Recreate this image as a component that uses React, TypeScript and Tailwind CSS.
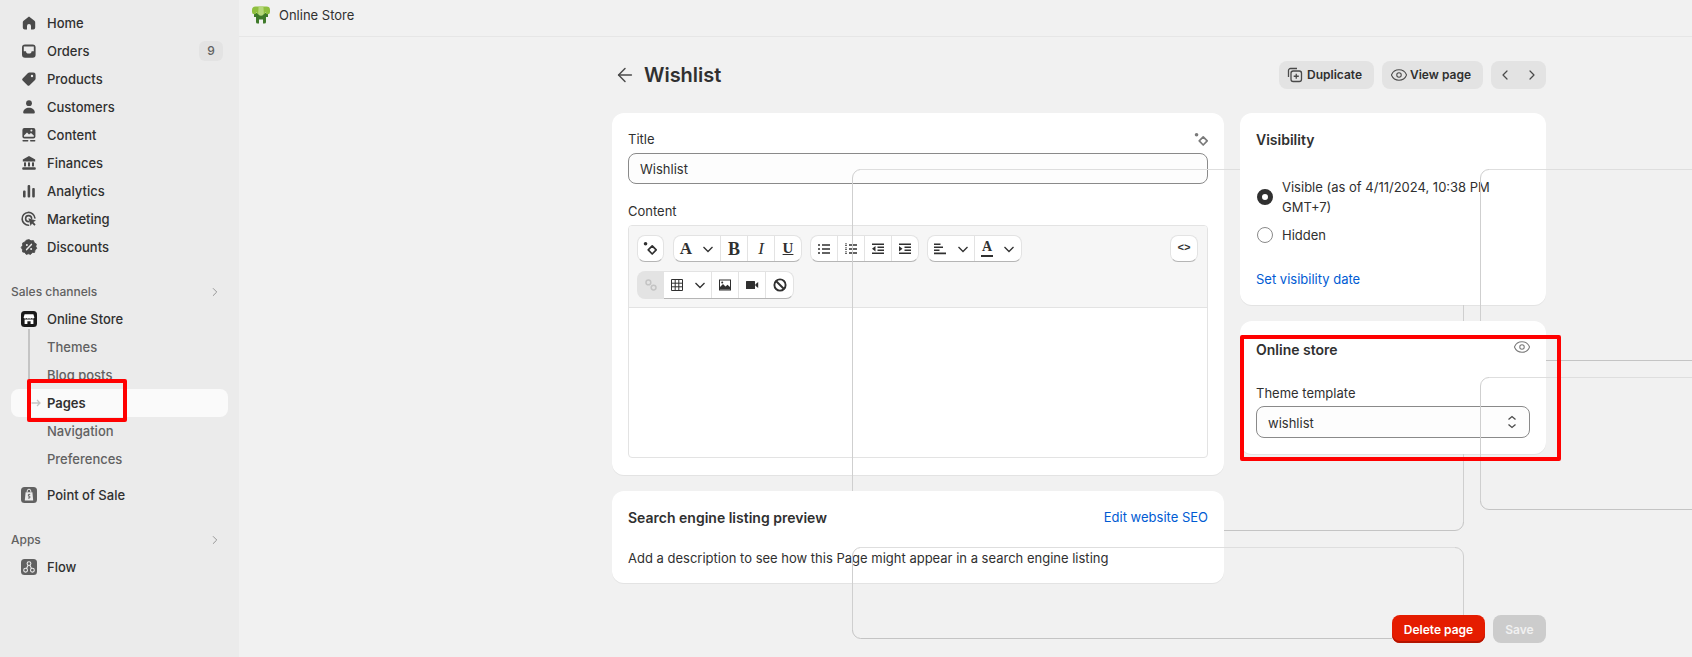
import type { ReactNode } from 'react';
import { ArrowLeft, ChevronLeft, ChevronRight, Eye } from 'lucide-react';

const Ico = ({ children, size = 20, className = '' }: { children: ReactNode; size?: number; className?: string }) => (
  <svg width={size} height={size} viewBox="0 0 20 20" className={`shrink-0 ${className}`} fill="#4a4a4a">
    {children}
  </svg>
);

const navIcons: Record<string, ReactNode> = {
  Home: <path d="M10 3.4 4.600 7.700C4 8.200 3.800 8.700 3.800 9.400V14.600A2 2 0 0 0 5.800 16.600H8V13A2 2 0 0 1 12 13V16.600H14.200A2 2 0 0 0 16.200 14.600V9.400C16.200 8.700 16 8.200 15.400 7.700Z" />,
  Orders: (
    <>
      <rect x="3" y="3.600" width="13.600" height="13.200" rx="3" />
      <path d="M4.800 5.400H14.800V10.200H12.600A2.800 2.400 0 0 1 7 10.200H4.800Z" fill="#ebebeb" />
    </>
  ),
  Products: <path fillRule="evenodd" d="M10.500 3.500H14.400A2.200 2.200 0 0 1 16.600 5.700V9.400A2 2 0 0 1 16 11L10.600 16.300A1.600 1.600 0 0 1 8.400 16.300L3.600 11.600A1.600 1.600 0 0 1 3.600 9.400L9 4.100A2 2 0 0 1 10.500 3.500ZM13 5.800A1.200 1.200 0 1 0 13 8.200 1.200 1.200 0 1 0 13 5.800Z" />,
  Customers: (
    <>
      <circle cx="10" cy="6.200" r="2.900" />
      <path d="M4.200 15.600C4.200 12.600 7 10.800 10 10.800S15.800 12.600 15.800 15.600A1 1 0 0 1 14.800 16.600H5.200A1 1 0 0 1 4.200 15.600Z" />
    </>
  ),
  Content: (
    <>
      <rect x="3.400" y="3" width="13" height="10.400" rx="2" />
      <path d="M5 10.500 8 7.400 10 9.400 12 8 14.800 10.500V11.800H5Z" fill="#ebebeb" />
      <circle cx="12.400" cy="5.600" r="1" fill="#ebebeb" />
      <rect x="3.400" y="15" width="6" height="1.500" rx=".7" />
      <rect x="11" y="15" width="5.400" height="1.500" rx=".7" />
    </>
  ),
  Finances: (
    <>
      <path d="M10 3 16.200 6.400V8.400H3.800V6.400Z" />
      <rect x="5" y="9.400" width="2" height="4" />
      <rect x="9" y="9.400" width="2" height="4" />
      <rect x="13" y="9.400" width="2" height="4" />
      <rect x="3.200" y="14.200" width="13.600" height="2.600" rx="1" />
    </>
  ),
  Analytics: (
    <>
      <rect x="4" y="9.600" width="2.600" height="7" rx="1" />
      <rect x="8.600" y="4" width="2.600" height="12.600" rx="1" />
      <rect x="13.200" y="7" width="2.600" height="9.600" rx="1" />
    </>
  ),
  Marketing: (
    <>
      <path d="M9.600 16.200A6.400 6.400 0 1 1 15.900 9" fill="none" stroke="#4a4a4a" strokeWidth="1.600" strokeLinecap="round" />
      <path d="M9.600 12.600A3 3 0 1 1 12.600 9.400" fill="none" stroke="#4a4a4a" strokeWidth="1.600" strokeLinecap="round" />
      <path d="M9.400 9.200 17 11.600 14.400 13 16.600 15.600 15.400 16.800 13 14.400 11.600 17Z" />
    </>
  ),
  Discounts: (
    <>
      <path d="M10 2.600 12 3.800 14.400 3.600 15.400 5.800 17.400 7 16.800 9.400 17.800 11.400 16 13 15.600 15.400 13.200 15.600 11.600 17.400 9.400 16.800 7.200 17.400 5.800 15.400 3.600 15 3.400 12.600 2.200 10.400 3.600 8.400 3.600 6 5.800 5 7.200 3.200Z" stroke="#4a4a4a" strokeWidth=".8" strokeLinejoin="round" />
      <path d="M12.400 7.400 7.600 12.600" stroke="#ebebeb" strokeWidth="1.500" strokeLinecap="round" />
      <circle cx="7.900" cy="7.900" r="1" fill="#ebebeb" />
      <circle cx="12.100" cy="12.100" r="1" fill="#ebebeb" />
    </>
  ),
};

const NavItem = ({ label, badge }: { label: string; badge?: string }) => (
  <div className="flex h-7 items-center gap-2 pl-[19px] pr-4 text-[13px] font-medium text-[#303030]">
    <Ico>{navIcons[label]}</Ico>
    <span className="flex-1 pt-[2px]">{label}</span>
    {badge && (
      <span className="flex h-5 w-6 items-center justify-center rounded-md bg-[#e3e3e3] text-xs text-[#616161]">{badge}</span>
    )}
  </div>
);

const SectionLabel = ({ label }: { label: string }) => (
  <div className="flex h-[27px] items-center justify-between pl-[11px] pr-[17px] text-xs font-medium text-[#616161]">
    <span>{label}</span>
    <ChevronRight size={14} color="#8a8a8a" strokeWidth={1.5} />
  </div>
);

const SubItem = ({ label }: { label: string }) => (
  <div className="flex h-7 items-center pl-[47px] pt-[2px] text-[13px] font-medium text-[#616161]">{label}</div>
);

const AppTile = ({ bg, children }: { bg: string; children: ReactNode }) => (
  <svg width="16" height="16" viewBox="0 0 16 16" className="ml-0.5 mr-0.5 shrink-0">
    <rect width="16" height="16" rx="3.500" fill={bg} />
    {children}
  </svg>
);

const Sidebar = () => (
  <aside className="relative h-full w-[239px] shrink-0 bg-[#ebebeb] pt-[9px]">
    {['Home', 'Orders', 'Products', 'Customers', 'Content', 'Finances', 'Analytics', 'Marketing', 'Discounts'].map((n) => (
      <NavItem key={n} label={n} badge={n === 'Orders' ? '9' : undefined} />
    ))}
    <div className="mt-[17px]">
      <SectionLabel label="Sales channels" />
    </div>
    <div className="flex h-7 items-center gap-2 pl-[19px] text-[13px] font-medium text-[#303030]">
      <AppTile bg="#1a1a1a">
        <path d="M3.600 3.200H12.400L13.400 6.400A1.600 1.600 0 0 1 10.600 7 2 2 0 0 1 8 7.200 2 2 0 0 1 5.400 7 1.600 1.600 0 0 1 2.600 6.400Z" fill="#fff" />
        <path d="M3.600 8.600H12.400V13H9.600V10.200H6.400V13H3.600Z" fill="#fff" />
      </AppTile>
      <span className="pt-[2px]">Online Store</span>
    </div>
    <div className="relative">
      <div className="absolute left-[28px] top-[-4px] h-[50px] w-[1.5px] bg-[#c4c4c4]" />
      <SubItem label="Themes" />
      <SubItem label="Blog posts" />
      <div className="relative mx-[11px] flex h-7 items-center rounded-lg bg-[#fafafa] pl-9 pt-[2px] text-[13px] font-semibold text-[#303030]">
        <svg width="10" height="10" viewBox="0 0 10 10" className="absolute left-[20px] top-[9px]" fill="none" stroke="#c4c4c4" strokeWidth="1.300">
          <path d="M0.500 5H9M6 2 9 5 6 8" />
        </svg>
        Pages
      </div>
      <SubItem label="Navigation" />
      <SubItem label="Preferences" />
    </div>
    <div className="mt-2 flex h-7 items-center gap-2 pl-[19px] text-[13px] font-medium text-[#303030]">
      <AppTile bg="#616161">
        <path d="M4.600 5.200H11.400L12.200 13.400H3.800Z" fill="#ebebeb" />
        <path d="M6.200 5V4A1.800 1.800 0 0 1 9.800 4V5" fill="none" stroke="#ebebeb" strokeWidth="1" />
        <path d="M9.200 7.400H7.400V9.200H8.800V11H7" fill="none" stroke="#616161" strokeWidth="1" />
      </AppTile>
      <span className="pt-[2px]">Point of Sale</span>
    </div>
    <div className="mt-[17px]">
      <SectionLabel label="Apps" />
    </div>
    <div className="flex h-7 items-center gap-2 pl-[19px] text-[13px] font-medium text-[#303030]">
      <AppTile bg="#616161">
        <g fill="none" stroke="#ebebeb" strokeWidth="1.100">
          <circle cx="8" cy="4.600" r="1.900" />
          <circle cx="4.600" cy="11.200" r="1.900" />
          <circle cx="11.400" cy="11.200" r="1.900" />
          <path d="M7.100 6.300 5.500 9.500M8.900 6.300 10.500 9.500" />
        </g>
      </AppTile>
      <span className="pt-[2px]">Flow</span>
    </div>
  </aside>
);

const Sparkle = ({ color = '#303030', size = 20, className = '' }: { color?: string; size?: number; className?: string }) => (
  <svg width={size} height={size} viewBox="0 0 20 20" fill="none" className={className}>
    <circle cx="4.800" cy="5" r="1.900" fill={color} />
    <path d="M11.800 7.200 16 11.500 11.800 15.800 7.600 11.500Z" stroke={color} strokeWidth="1.800" strokeLinejoin="round" />
  </svg>
);

const Caret = () => (
  <svg width="12" height="12" viewBox="0 0 12 12" fill="none" stroke="#303030" strokeWidth="1.300" className="shrink-0">
    <path d="M1.500 4 6 8.500 10.500 4" />
  </svg>
);

const Cell = ({ w, children, last }: { w: string; children: ReactNode; last?: boolean }) => (
  <div className={`flex h-full items-center justify-center gap-[10px] ${w} ${last ? '' : 'border-r border-[#e3e3e3]'}`}>{children}</div>
);

const Group = ({ children, className = '' }: { children: ReactNode; className?: string }) => (
  <div className={`flex h-[27px] overflow-hidden rounded-lg border border-[#e3e3e3] border-b-[#b5b5b5] bg-white ${className}`}>{children}</div>
);

const Serif = ({ children, className = '' }: { children: ReactNode; className?: string }) => (
  <span className={`font-['Liberation_Serif',serif] leading-none text-[#303030] ${className}`}>{children}</span>
);

const Bars = ({ d }: { d: string }) => (
  <svg width="14" height="14" viewBox="0 0 14 14" fill="#303030">
    <path d={d} />
  </svg>
);

const Toolbar = () => (
  <div className="border-b border-[#e3e3e3] bg-[#f6f6f6] px-2 pb-2 pt-[9px]">
    <div className="flex items-center">
      <Group className="w-[27px] justify-center">
        <Cell w="w-full" last>
          <Sparkle size={19} />
        </Cell>
      </Group>
      <Group className="ml-[9px]">
        <Cell w="w-[47px]">
          <Serif className="text-[17px] font-bold">A</Serif>
          <Caret />
        </Cell>
        <Cell w="w-[27px]">
          <Serif className="text-[18px] font-bold">B</Serif>
        </Cell>
        <Cell w="w-[27px]">
          <Serif className="text-[17px] italic">I</Serif>
        </Cell>
        <Cell w="w-[26px]" last>
          <Serif className="text-[15px] font-bold underline">U</Serif>
        </Cell>
      </Group>
      <Group className="ml-2">
        <Cell w="w-[27px]">
          <Bars d="M1 2.200h2v1.600H1zM5 2.200h8v1.600H5zM1 6.200h2v1.600H1zM5 6.200h8v1.600H5zM1 10.200h2v1.600H1zM5 10.200h8v1.600H5z" />
        </Cell>
        <Cell w="w-[27px]">
          <Bars d="M1 1.600h2v.7H1zM1 3.200h2v.7H1zM1 5.600h2v.7H1zM1 7.200h2v.7H1zM1 9.600h2v.7H1zM1 11.200h2v.7H1zM5 2.200h8v1.600H5zM5 6.200h8v1.600H5zM5 10.200h8v1.600H5z" />
        </Cell>
        <Cell w="w-[27px]">
          <Bars d="M1 1.400h12v1.500H1zM6.500 4.400H13v1.500H6.500zM6.500 7.400H13v1.500H6.500zM1 10.600h12v1.500H1zM4.500 4 1 6.700l3.500 2.700z" />
        </Cell>
        <Cell w="w-[26px]" last>
          <Bars d="M1 1.400h12v1.500H1zM6.500 4.400H13v1.500H6.500zM6.500 7.400H13v1.500H6.500zM1 10.600h12v1.500H1zM1 4l3.500 2.700L1 9.400z" />
        </Cell>
      </Group>
      <Group className="ml-2">
        <Cell w="w-[47px]">
          <Bars d="M1 1.500h6.500V3H1zM1 4.600h9V6H1zM1 7.600h5.500v1.400H1zM1 10.600h12v1.600H1z" />
          <Caret />
        </Cell>
        <Cell w="w-[46px]" last>
          <span className="flex flex-col items-center">
            <Serif className="text-[14px] font-bold">A</Serif>
            <span className="mt-px h-[2px] w-[12px] bg-[#303030]" />
          </span>
          <Caret />
        </Cell>
      </Group>
      <Group className="ml-auto mr-[1px] w-[28px] justify-center">
        <Cell w="w-full" last>
          <span className="font-['Liberation_Mono',monospace] text-[11px] font-bold leading-none text-[#303030]">&lt;&gt;</span>
        </Cell>
      </Group>
    </div>
    <div className="mt-[9px] flex">
      <div className="flex h-7 w-[27px] items-center justify-center rounded-l-lg bg-[#e3e3e3]">
        <svg width="14" height="14" viewBox="0 0 14 14" fill="none" stroke="#c4c4c4" strokeWidth="1.500">
          <circle cx="4.400" cy="4.400" r="2.400" />
          <circle cx="9.600" cy="9.600" r="2.400" />
        </svg>
      </div>
      <div className="flex h-7 overflow-hidden rounded-r-lg border border-l-0 border-[#e3e3e3] border-b-[#b5b5b5] bg-white">
        <Cell w="w-12">
          <svg width="14" height="14" viewBox="0 0 14 14" fill="none" stroke="#303030" strokeWidth="1">
            <path d="M1.500 1.500h11v11h-11zM1.500 5.200h11M1.500 8.800h11M5.200 1.500v11M8.800 1.500v11" />
          </svg>
          <Caret />
        </Cell>
        <Cell w="w-[27px]">
          <svg width="14" height="14" viewBox="0 0 14 14">
            <rect x="1" y="1.500" width="12" height="11" fill="#303030" />
            <rect x="2" y="2.500" width="10" height="9" fill="#fff" />
            <path d="M2 11.500V9L5 6 7.500 8.500 9.500 6.800 12 9V11.500Z" fill="#303030" />
            <circle cx="4.200" cy="4.400" r="1" fill="#303030" />
          </svg>
        </Cell>
        <Cell w="w-[27px]">
          <svg width="14" height="14" viewBox="0 0 14 14" fill="#303030">
            <rect x="1" y="3" width="9" height="8" rx=".6" />
            <path d="M10.400 6.200 13.200 4V10L10.400 7.800Z" />
          </svg>
        </Cell>
        <Cell w="w-[27px]" last>
          <svg width="16" height="16" viewBox="0 0 16 16" fill="none" stroke="#303030" strokeWidth="1.900">
            <circle cx="8" cy="8" r="5.600" />
            <path d="M4 4 12 12" />
          </svg>
        </Cell>
      </div>
    </div>
  </div>
);

const Card = ({ children, className = '' }: { children: ReactNode; className?: string }) => (
  <div className={`rounded-xl bg-white px-4 shadow-[0_1px_0_#e3e3e3] ${className}`}>{children}</div>
);

const TopButton = ({ children, className = '' }: { children: ReactNode; className?: string }) => (
  <div className={`flex h-7 items-center rounded-lg bg-[#e3e3e3] text-xs font-semibold text-[#303030] ${className}`}>{children}</div>
);

// the thin connector lines that lie over the page in the reference: light on top, darker at the bottom
const Connectors = () => (
  <svg width="1692" height="657" className="pointer-events-none absolute left-0 top-0" fill="none" strokeWidth="1">
    <g stroke="#dedede">
      <path d="M860.500 169.500H1240" />
      <path d="M860.500 547.500H1455" />
      <path d="M1692 169.500H1489" />
      <path d="M1692 377.500H1489" />
    </g>
    <g stroke="#cfcfcf">
      <path d="M852.500 491V178A8.500 8.500 0 0 1 860.500 169.500" />
      <path d="M1455 547.500A8.500 8.500 0 0 1 1463.500 556V615" />
      <path d="M860.500 547.500A8.500 8.500 0 0 0 852.500 556V630" />
      <path d="M1489 169.500A8.500 8.500 0 0 0 1480.500 178V321" />
      <path d="M1489 377.500A8.500 8.500 0 0 0 1480.500 386V501" />
      <path d="M1463.500 305V321M1463.500 454V522" />
    </g>
    <g stroke="#c4c4c4">
      <path d="M852.500 630A8.500 8.500 0 0 0 860.500 638.500H1392" />
      <path d="M1480.500 501A8.500 8.500 0 0 0 1489 509.500H1692" />
      <path d="M1463.500 522A8.500 8.500 0 0 1 1455 530.500H1224" />
      <path d="M1546 360.500H1692" />
    </g>
  </svg>
);

const RedBox = ({ className }: { className: string }) => (
  <div className={`pointer-events-none absolute rounded-[2px] border-4 border-[#ff0000] ${className}`} />
);

export default function App() {
  return (
    <div className="relative flex h-[657px] w-[1692px] overflow-hidden bg-[#f1f1f1] font-['Inter',sans-serif] text-[13px] text-[#303030]">
      <Sidebar />
      <div className="flex-1">
        <div className="flex h-[37px] items-center gap-[9px] border-b border-[#e6e6e6] pb-1 pl-[13px] text-[13px] text-[#303030]">
          <svg width="18" height="18" viewBox="0 0 18 18" className="-mt-[2px]">
            <path d="M2 7V11H4V16A1.500 1.500 0 0 0 5.500 17.500H7V13.500H11V17.500H12.500A1.500 1.500 0 0 0 14 16V11H16V7Z" fill="#3f7a2a" />
            <path d="M3.500 0.500H14.500A3.500 3.500 0 0 1 18 4V6A2.200 2.200 0 0 1 13.500 6 2.200 2.200 0 0 1 9 6 2.200 2.200 0 0 1 4.500 6 2.200 2.200 0 0 1 0 6V4A3.500 3.500 0 0 1 3.500 0.500Z" fill="#8fbf3f" />
            <path d="M6.600 0.500H11.400L11.800 7A2.800 2.800 0 0 1 6.200 7Z" fill="#b5d77a" />
          </svg>
          Online Store
        </div>
        <main className="ml-[373px] w-[934px] pt-6">
          <div className="flex h-7 items-center">
            <ArrowLeft size={22} strokeWidth={1.600} color="#4a4a4a" className="ml-[2px]" />
            <h1 className="ml-2 text-xl font-semibold text-[#303030]">Wishlist</h1>
            <div className="ml-auto flex gap-2">
              <TopButton className="w-[95px] gap-1 pl-2">
                <svg width="16" height="16" viewBox="0 0 16 16" fill="none" stroke="#4a4a4a" strokeWidth="1.300">
                  <path d="M1.500 10V3.500A2 2 0 0 1 3.500 1.500H10" />
                  <rect x="4" y="4" width="10.500" height="10.500" rx="2.200" />
                  <path d="M9.250 6.700V11.800M6.700 9.250H11.800" />
                </svg>
                Duplicate
              </TopButton>
              <TopButton className="w-[101px] gap-[2px] pl-2">
                <Eye size={18} strokeWidth={1.400} color="#4a4a4a" />
                View page
              </TopButton>
              <TopButton className="w-[55px] justify-center gap-[11px]">
                <ChevronLeft size={16} strokeWidth={1.800} color="#4a4a4a" />
                <ChevronRight size={16} strokeWidth={1.800} color="#4a4a4a" />
              </TopButton>
            </div>
          </div>

          <div className="mt-6 grid grid-cols-[612px_306px] items-start gap-4">
            <div className="flex flex-col gap-4">
              <Card className="pb-[17px] pt-4">
                <div className="flex h-5 items-center justify-between">
                  <span className="pt-[2px]">Title</span>
                  <Sparkle color="#7a7a7a" size={19} className="-mr-[3px]" />
                </div>
                <div className="mt-1 flex h-[31px] items-center rounded-lg border border-[#8a8a8a] bg-[#fdfdfd] px-[11px] pt-[2px]">Wishlist</div>
                <div className="mt-[17px] flex h-5 items-center pt-[2px]">Content</div>
                <div className="mt-1 h-[233px] overflow-hidden rounded border border-[#e3e3e3]">
                  <Toolbar />
                </div>
              </Card>
              <Card className="pb-[15px] pt-[17px]">
                <div className="flex h-5 items-center justify-between">
                  <span className="text-sm font-semibold">Search engine listing preview</span>
                  <span className="text-[#005bd3]">Edit website SEO</span>
                </div>
                <p className="mt-5 h-5 leading-5">Add a description to see how this Page might appear in a search engine listing</p>
              </Card>
            </div>

            <div className="flex flex-col gap-4">
              <Card className="pb-4 pt-4">
                <div className="flex h-[22px] items-center text-sm font-semibold">Visibility</div>
                <div className="mt-[26px] flex items-center gap-[9px] pl-px leading-5">
                  <span className="h-4 w-4 shrink-0 rounded-full border-[5px] border-[#303030] bg-white" />
                  <span className="w-[250px]">Visible (as of 4/11/2024, 10:38 PM GMT+7)</span>
                </div>
                <div className="mt-2 flex items-center gap-[9px] pl-px leading-5">
                  <span className="h-4 w-4 shrink-0 rounded-full border border-[#8a8a8a] bg-white" />
                  <span>Hidden</span>
                </div>
                <div className="mt-6 h-5 leading-5 text-[#005bd3]">Set visibility date</div>
              </Card>
              <Card className="pb-4 pt-[19px]">
                <div className="flex h-5 items-center justify-between">
                  <span className="text-sm font-semibold">Online store</span>
                  <Eye size={18} strokeWidth={1.400} color="#7a7a7a" className="-mr-px -mt-1.5" />
                </div>
                <div className="mt-[22px] flex h-5 items-center pt-[3px]">Theme template</div>
                <div className="mt-1 flex h-8 items-center justify-between rounded-lg border border-[#8a8a8a] bg-[#fdfdfd] pl-[11px] pr-[11px]">
                  <span className="pt-[3px]">wishlist</span>
                  <svg width="12" height="16" viewBox="0 0 12 16" fill="none" stroke="#4a4a4a" strokeWidth="1.300">
                    <path d="M2.500 5.500 6 2.500 9.500 5.500M2.500 10.500 6 13.500 9.500 10.500" />
                  </svg>
                </div>
              </Card>
            </div>
          </div>

          <div className="mt-8 flex justify-end gap-2">
            <div className="flex h-7 w-[93px] items-center justify-center rounded-lg bg-[#e51c00] pt-px text-xs font-semibold text-white shadow-[inset_0_-2px_0_#b41400]">Delete page</div>
            <div className="flex h-7 w-[53px] items-center justify-center rounded-lg bg-[#cccccc] pt-[2px] text-xs font-semibold text-[#f1f1f1]">Save</div>
          </div>
        </main>
      </div>
      <Connectors />
      <RedBox className="left-[27px] top-[379px] h-[43px] w-[100px]" />
      <RedBox className="left-[1240px] top-[335px] h-[126px] w-[321px]" />
    </div>
  );
}
